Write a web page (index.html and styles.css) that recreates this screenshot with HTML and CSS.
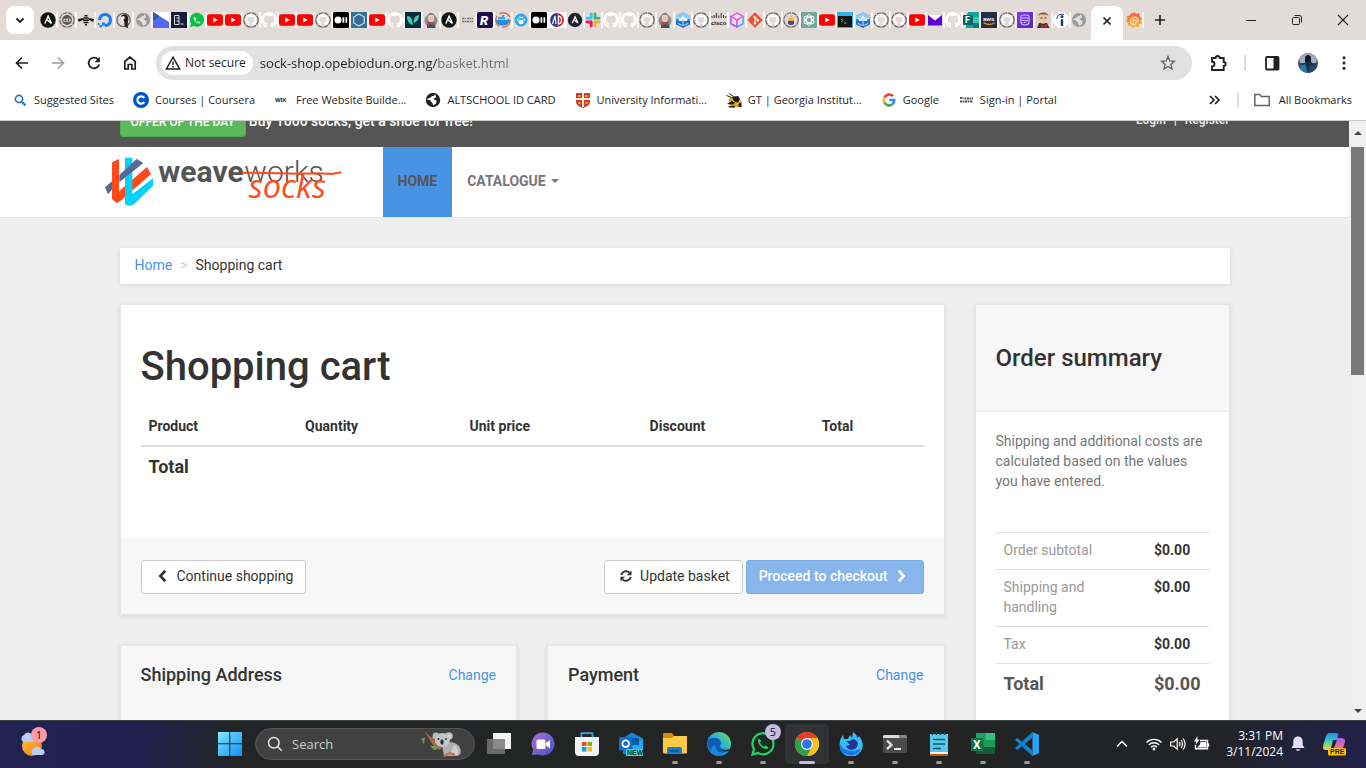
FILE: index.html
```html
<!DOCTYPE html>
<html lang="en">
<head>
<meta charset="utf-8">
<meta name="viewport" content="width=device-width, initial-scale=1">
<title>Shopping cart</title>
<link rel="stylesheet" href="styles.css">
</head>
<body>
<svg class="sprite" aria-hidden="true">
  <defs>
    <linearGradient id="g-win" x1="0" y1="0" x2="1" y2="1"><stop offset="0" stop-color="#7ceaff"/><stop offset="1" stop-color="#0d8df5"/></linearGradient>
    <linearGradient id="g-chat" x1="0" y1="0" x2="1" y2="1"><stop offset="0" stop-color="#a571cf"/><stop offset="1" stop-color="#4a52cf"/></linearGradient>
    <linearGradient id="g-edge" x1="0" y1="1" x2="1" y2="0"><stop offset="0" stop-color="#0b5cb5"/><stop offset=".5" stop-color="#27a9e0"/><stop offset="1" stop-color="#6fe45e"/></linearGradient>
    <linearGradient id="g-sun" x1="0" y1="0" x2="1" y2="1"><stop offset="0" stop-color="#ffc53a"/><stop offset="1" stop-color="#ef7a0c"/></linearGradient>
    <linearGradient id="g-cop" x1="0" y1="0" x2="0" y2="1"><stop offset="0" stop-color="#1b8df0"/><stop offset=".5" stop-color="#3fd1b0"/><stop offset="1" stop-color="#f6d02c"/></linearGradient>
    <linearGradient id="g-cop2" x1="0" y1="0" x2="0" y2="1"><stop offset="0" stop-color="#a45bf0"/><stop offset="1" stop-color="#ff7d6e"/></linearGradient>
    <linearGradient id="g-graf" x1="0" y1="0" x2="0" y2="1"><stop offset="0" stop-color="#f0562c"/><stop offset="1" stop-color="#fbc32c"/></linearGradient>
    <linearGradient id="g-purple" x1="0" y1="0" x2="1" y2="1"><stop offset="0" stop-color="#7a3ff0"/><stop offset="1" stop-color="#5a22b8"/></linearGradient>
    <path id="cat" d="M8 0C3.58 0 0 3.58 0 8c0 3.54 2.29 6.53 5.47 7.59.4.07.55-.17.55-.38 0-.19-.01-.82-.01-1.49-2.01.37-2.53-.49-2.69-.94-.09-.23-.48-.94-.82-1.13-.28-.15-.68-.52-.01-.53.63-.01 1.08.58 1.23.82.72 1.21 1.87.87 2.33.66.07-.52.28-.87.51-1.07-1.78-.2-3.64-.89-3.64-3.95 0-.87.31-1.59.82-2.15-.08-.2-.36-1.02.08-2.12 0 0 .67-.21 2.2.82.64-.18 1.32-.27 2-.27s1.36.09 2 .27c1.53-1.04 2.2-.82 2.2-.82.44 1.1.16 1.92.08 2.12.51.56.82 1.27.82 2.15 0 3.07-1.87 3.75-3.65 3.95.29.25.54.73.54 1.48 0 1.07-.01 1.93-.01 2.2 0 .21.15.46.55.38A8.01 8.01 0 0 0 16 8c0-4.42-3.58-8-8-8z"/>
  </defs>
  <symbol id="ghw" viewBox="0 0 16 16"><use href="#cat" fill="#fff"/></symbol>
  <symbol id="ghd" viewBox="0 0 16 16"><circle cx="8" cy="8" r="7.2" fill="none" stroke="#6b6868" stroke-width="1.3" stroke-dasharray="5 .8"/><g transform="translate(2.2 2.2) scale(.73)"><use href="#cat" fill="#fff"/></g></symbol>
  <symbol id="ans" viewBox="0 0 16 16"><circle cx="8" cy="8" r="7.7" fill="#111"/><path d="M4.8 11.6 8.1 4.2l3.3 7.2-4.6-3.6" fill="none" stroke="#fff" stroke-width="1.4"/></symbol>
  <symbol id="ans2" viewBox="0 0 16 16"><circle cx="8" cy="8" r="7.2" fill="#16222e"/><path d="M5.2 11.2 8.1 4.8l2.9 6.2-4.2-3.2" fill="none" stroke="#fff" stroke-width="1.3"/></symbol>
  <symbol id="mask" viewBox="0 0 16 16"><circle cx="8" cy="8" r="7.2" fill="none" stroke="#6b6868" stroke-width="1.2" stroke-dasharray="5 .8"/><circle cx="8" cy="8" r="5" fill="#5c5858"/><path d="M4.500 6.800h7v2.800h-7z" fill="#fff"/><circle cx="6.500" cy="8.200" r="1" fill="#333"/><circle cx="9.500" cy="8.200" r="1" fill="#333"/></symbol>
  <symbol id="bee" viewBox="0 0 16 16"><path d="M0 7l5.500-1v1.500L2 9.500H.5zM16 7l-5.500-1v1.500l3.500 2h1.500zM6.500 3h3v1.500h-3zM5.500 5.200h5v1.600h-5zM5 7.500h6v1.600H5zM5.500 9.800h5v1.500h-5zM7 12h2v1.500H7z" fill="#17120f"/></symbol>
  <symbol id="docean" viewBox="0 0 16 16"><path d="M8 13.500A5.500 5.500 0 1 0 2.500 8" fill="none" stroke="#0a80ff" stroke-width="3.200"/><path d="M5 10.500h3v3H5zM2.500 13H5v2.300H2.500zM.8 11h1.800v2H.8z" fill="#0a80ff"/></symbol>
  <symbol id="eagle" viewBox="0 0 16 16"><circle cx="7.500" cy="8" r="6.600" fill="none" stroke="#666" stroke-width="1.300"/><path d="M5 4c3-3 6-2 7 1 1 3-1 6 0 11-3 0-4-3-3.500-6L7 7z" fill="#211d1c"/><path d="M5 5l3-1 1 2-3 3z" fill="#fff"/></symbol>
  <symbol id="globe" viewBox="0 0 16 16"><circle cx="8" cy="8" r="7" fill="#969a9f"/><path d="M9 1.800c1 2-1 2.400-2 2.400S6 6 4.500 6 3 7.500 1.800 8c2 0 3.500 0 4 1.500S8 11 8 14c2-1 3.500-2 3.500-4S9 8 8.500 7 11 6.500 11 5s-1-2-2-3.200z" fill="#e4dcda"/></symbol>
  <symbol id="play" viewBox="0 0 16 16"><path d="M0 0h16v16H0z" fill="#fff"/><path d="M0 0l16 10v6H1z" fill="#5468f5"/><path d="M0 0l6 3.500V16H0z" fill="#3658b5"/><path d="M0 9l6-4v11H0z" fill="#4d69ec"/></symbol>
  <symbol id="dark" viewBox="0 0 16 16"><path d="M0 0h16v16H0z" fill="#171c38"/><path d="M3.500 3.500H8v9H3.500zM5.500 6H8M5.500 9H8M9.500 12h3" fill="none" stroke="#d9dce8" stroke-width="1"/></symbol>
  <symbol id="wa" viewBox="0 0 16 16"><path d="M1 15.200l1-3.800A7 7 0 1 1 4.800 14z" fill="#0bc143"/><path d="M5.500 4.500c-1.500 1-.5 3.500 1.300 5.200s4 2.300 4.900.9l-1.900-1.200-1 .8c-1-.4-1.900-1.400-2.300-2.400l.8-.9z" fill="#fff"/></symbol>
  <symbol id="yt" viewBox="0 0 16 16"><rect y="2.300" width="16" height="11.400" rx="2.600" fill="#f00"/><path d="M6.300 5.500v5l4.400-2.500z" fill="#fff"/></symbol>
  <symbol id="medium" viewBox="0 0 16 16"><rect width="16" height="16" rx="1.500" fill="#000"/><circle cx="5" cy="8" r="3.500" fill="#fff"/><path d="M9.500 5.200h1.800v5.600H9.500zM12.500 5.200h1.700v5.600h-1.700z" fill="#fff"/></symbol>
  <symbol id="hex" viewBox="0 0 16 16"><path d="M0 0h16v16H0z" fill="#336e96"/><path d="M8 2l5.300 3v6L8 14l-5.300-3V5z" fill="none" stroke="#cfe0ec" stroke-width="1.200"/></symbol>
  <symbol id="leaf" viewBox="0 0 16 16"><path d="M0 0h16v16H0z" fill="#0b2a3d"/><path d="M2 4c4 0 5.500 3 5.700 9C4 12 2 9 2 4zM14 3c-4 1-5.500 3.500-5.400 8C12 10 14 7 14 3z" fill="#41d2b0"/></symbol>
  <symbol id="jenk" viewBox="0 0 16 16"><circle cx="8" cy="8.500" r="6.500" fill="#8d8b8c"/><path d="M4 16c0-5 1-6 4-6s4.500 2 4.500 6z" fill="#31556b"/><ellipse cx="8" cy="5.500" rx="3.200" ry="4.700" fill="#e3c7b4"/><path d="M4.800 3.500C5.500 0 10.500 0 11.200 3.500L9.500 2.500h-3z" fill="#6a5a52"/><path d="M5 9.500l3 1.500 3-1.500v4L8 12l-3 2z" fill="#d2393b"/></symbol>
  <symbol id="jenk2" viewBox="0 0 16 16"><path d="M0 0h16v16H0z" fill="#dcd3ce"/><path d="M2 16l2-5h8l2.500 5z" fill="#383c42"/><ellipse cx="8" cy="6" rx="4.800" ry="5.800" fill="#ecc7a2"/><path d="M3 4c1-4 9-5 10.500 0l-2-1.500H5z" fill="#6f5a4a"/><path d="M6 13l3 1 3-2v3.500l-3-1-3 1z" fill="#cc3030"/><path d="M5.500 6h2M9.500 6h2" stroke="#333"/></symbol>
  <symbol id="docker" viewBox="0 0 16 16"><circle cx="8" cy="8" r="7.200" fill="none" stroke="#e05a3c" stroke-width="1.200" stroke-dasharray="12 3"/><path d="M1 8h11c1-1 2-1 3-.5-1 4-3 6-7 6S1.500 12 1 8z" fill="#1d8fe0"/><path d="M3 5h7v2.500H3zM7 3h2v2H7z" fill="#3aa5ee"/></symbol>
  <symbol id="paw" viewBox="0 0 16 16"><circle cx="8" cy="8" r="6.500" fill="#27a8ef"/><ellipse cx="8" cy="10" rx="2.600" ry="2.200" fill="#fff"/><circle cx="4.700" cy="7.700" r="1" fill="#fff"/><circle cx="6.800" cy="5.600" r="1" fill="#fff"/><circle cx="9.300" cy="5.600" r="1" fill="#fff"/><circle cx="11.300" cy="7.700" r="1" fill="#fff"/></symbol>
  <symbol id="ad" viewBox="0 0 16 16"><path d="M0 0h16v16H0z" fill="#fff"/><path d="M8 1a7 7 0 0 0 0 14z" fill="#2b3d8c"/><path d="M8 1a7 7 0 0 1 0 14z" fill="#d7263c"/><path d="M3.500 12L6 4l1 8M9.500 4v8c4 0 4-8 0-8z" fill="none" stroke="#fff" stroke-width="1.200"/></symbol>
  <symbol id="slack" viewBox="0 0 16 16"><g stroke-width="2.800" stroke-linecap="round"><path d="M6.200 2v4M2 6.200h4" stroke="#36c5f0"/><path d="M10 2v4.200h4" fill="none" stroke="#2eb67d"/><path d="M10 10h4M10 10v4" stroke="#ecb22e"/><path d="M6.200 10v4M2 10h4" stroke="#e01e5a"/></g></symbol>
  <symbol id="helm" viewBox="0 0 16 16"><path d="M8 .3l7 3.500v8.400l-7 3.500-7-3.500V3.800z" fill="#3c8bd9"/><path d="M1 3.800L8 .3l7 3.500V7H1z" fill="#8ccbf5"/><path d="M1 9h14v3.200l-7 3.500-7-3.500z" fill="#2468c4"/><path d="M2.500 7.500l3 1.500h5l3-1.500-1 4.500h-9z" fill="#1f6fd6"/><path d="M3 5l2 2 3-3.500L11 7l2-2-1 4H4z" fill="#e2f5ff"/><path d="M3 11c2 3 8 3 10 0M8 7v6" fill="none" stroke="#9ad3fb" stroke-width="1.200"/></symbol>
  <symbol id="cube" viewBox="0 0 16 16"><path d="M8 1l6 3.300v7.400L8 15l-6-3.300V4.300z" fill="#f2dff8"/><path d="M2 4.300L8 1l6 3.300L8 8z" fill="none" stroke="#e85ce8" stroke-width="1.500"/><path d="M2 4.300v7.400L8 15V8" fill="none" stroke="#b84df0" stroke-width="1.500"/><path d="M14 4.300v7.400L8 15" fill="none" stroke="#4aa8f5" stroke-width="1.500"/></symbol>
  <symbol id="git" viewBox="0 0 16 16"><path d="M8 .3L15.700 8 8 15.700.3 8z" fill="#ef5133"/><path d="M6.300 3.700L8 5.500v6M8 5.500l2.800 2.500" stroke="#fff" fill="none"/><circle cx="8" cy="11.300" r="1.200" fill="#fff"/><circle cx="10.800" cy="8.200" r="1.200" fill="#fff"/><circle cx="8" cy="5.600" r="1.200" fill="#fff"/></symbol>
  <symbol id="sun" viewBox="0 0 16 16"><circle cx="8" cy="8" r="7.200" fill="none" stroke="#6b6868" stroke-width="1.200" stroke-dasharray="5 .8"/><path d="M5 8.500h6V12c-2 1.500-4 1.500-6 0z" fill="#4b4b78"/><path d="M5.500 8.500a2.500 2.500 0 0 1 5 0zM8 3v2M4.500 4.500l1 1M11.500 4.500l-1 1" stroke="#f2a23a" fill="#f6b14a"/></symbol>
  <symbol id="gpt" viewBox="0 0 16 16"><rect width="16" height="16" rx="1" fill="#74a898"/><g fill="none" stroke="#fff" stroke-width=".9"><ellipse cx="8" cy="8" rx="2.600" ry="5.400"/><ellipse cx="8" cy="8" rx="2.600" ry="5.400" transform="rotate(60 8 8)"/><ellipse cx="8" cy="8" rx="2.600" ry="5.400" transform="rotate(120 8 8)"/></g></symbol>
  <symbol id="term" viewBox="0 0 16 16"><path d="M0 0h16v16H0z" fill="#2fb3e8"/><path d="M1 4h14v11H1z" fill="#151515"/><path d="M4 7l2 1.500L4 10M7 11h2.500" stroke="#42d36b" fill="none"/></symbol>
  <symbol id="mail" viewBox="0 0 16 16"><path d="M1 3h14v10.500H1z" fill="#6001d2"/><path d="M1 3h14L8 8.500z" fill="#fff"/></symbol>
  <symbol id="pur" viewBox="0 0 16 16"><path d="M0 0h16v16H0z" fill="url(#g-purple)"/><path d="M4 4.500C4 2.500 12 2.500 12 4.500V10c0 2-2 3-4 3s-4-1-4-3zM5 6h6M5 8.500h6M6.500 10.500h3" fill="none" stroke="#d9c2ff" stroke-width="1.200"/></symbol>
  <symbol id="info" viewBox="0 0 16 16"><circle cx="8" cy="8" r="8" fill="#fff"/><circle cx="9" cy="4.500" r="1.500" fill="#0b3a9c"/><path d="M7.800 7.200h2.400V14H7.800z" fill="#0b3a9c"/><path d="M4 7c0-4 3-5.500 7-4.500" stroke="#0b3a9c" fill="none"/></symbol>
  <symbol id="graf" viewBox="0 0 16 16"><path d="M8 0l2 1.800 3-.3.6 2.700L16 6l-1.200 2.500L16 11l-2.600 1.300L12.500 15l-3-.3L7 16l-1.800-2L2.200 13.700 2 11 0 9l1.400-2.300L1 4l3-.6L5.400.9 8 1.500z" fill="url(#g-graf)"/><path d="M12.300 9.800c.5-4-3-5.500-5.500-4.200S4 11.500 7 12.300s4.500-3 2.500-4.200-3 1.200-1.700 1.700" fill="none" stroke="#f3e3dc" stroke-width="1.300"/></symbol>
  <symbol id="chev" viewBox="0 0 16 16"><path d="M10.500 2L5 8l5.500 6" fill="none" stroke="currentColor" stroke-width="3"/></symbol>
</svg>

<header class="browser">
  <div class="tabstrip">
    <button class="tab-search" aria-label="Search tabs"><svg viewBox="0 0 16 16"><path d="M4.500 6.500L8 10l3.500-3.500" fill="none" stroke="#1f1f1f" stroke-width="1.800"/></svg></button>
    <div class="tabs">
      <button class="tab wide" aria-label="Ansible"><svg><use href="#ans"/></svg></button>
      <button class="tab wide" aria-label="Profile"><svg><use href="#mask"/></svg></button>
      <button class="tab wide" aria-label="Bee"><svg><use href="#bee"/></svg></button>
      <button class="tab wide" aria-label="DigitalOcean"><svg><use href="#docean"/></svg></button>
      <button class="tab wide" aria-label="Eagle"><svg><use href="#eagle"/></svg></button>
      <button class="tab wide" aria-label="Site"><svg><use href="#globe"/></svg></button>
      <button class="tab" aria-label="Player"><svg><use href="#play"/></svg></button>
      <button class="tab" aria-label="Learning"><svg><use href="#dark"/></svg></button>
      <button class="tab" aria-label="WhatsApp"><svg><use href="#wa"/></svg></button>
      <button class="tab" aria-label="YouTube"><svg><use href="#yt"/></svg></button>
      <button class="tab" aria-label="YouTube"><svg><use href="#yt"/></svg></button>
      <button class="tab" aria-label="GitHub"><svg><use href="#ghd"/></svg></button>
      <button class="tab" aria-label="GitHub"><svg><use href="#ghw"/></svg></button>
      <button class="tab" aria-label="YouTube"><svg><use href="#yt"/></svg></button>
      <button class="tab" aria-label="YouTube"><svg><use href="#yt"/></svg></button>
      <button class="tab" aria-label="GitHub"><svg><use href="#ghd"/></svg></button>
      <button class="tab" aria-label="Medium"><svg><use href="#medium"/></svg></button>
      <button class="tab" aria-label="Hex"><svg><use href="#hex"/></svg></button>
      <button class="tab" aria-label="YouTube"><svg><use href="#yt"/></svg></button>
      <button class="tab" aria-label="GitHub"><svg><use href="#ghw"/></svg></button>
      <button class="tab" aria-label="Leaf"><svg><use href="#leaf"/></svg></button>
      <button class="tab" aria-label="Jenkins"><svg><use href="#jenk"/></svg></button>
      <button class="tab" aria-label="Ansible"><svg><use href="#ans"/></svg></button>
      <button class="tab" aria-label="AltSchool"><svg viewBox="0 0 16 16"><path d="M3 6.500h4M8 6.500h6M3 9.500h11" stroke="#77706e" stroke-width="1.600" stroke-dasharray="2 .5"/></svg></button>
      <button class="tab" aria-label="R"><svg viewBox="0 0 16 16"><rect width="16" height="16" rx="2" fill="#1e0f4a"/><text x="3" y="13" font-family="Roboto" font-style="italic" font-weight="900" font-size="13" fill="#fff">R</text></svg></button>
      <button class="tab" aria-label="Docker"><svg><use href="#docker"/></svg></button>
      <button class="tab" aria-label="Paw"><svg><use href="#paw"/></svg></button>
      <button class="tab" aria-label="Medium"><svg><use href="#medium"/></svg></button>
      <button class="tab" aria-label="AD"><svg><use href="#ad"/></svg></button>
      <button class="tab" aria-label="Ansible"><svg><use href="#ans2"/></svg></button>
      <button class="tab" aria-label="Slack"><svg><use href="#slack"/></svg></button>
      <button class="tab" aria-label="GitHub"><svg><use href="#ghw"/></svg></button>
      <button class="tab" aria-label="GitHub"><svg><use href="#ghw"/></svg></button>
      <button class="tab" aria-label="GitHub"><svg><use href="#ghd"/></svg></button>
      <button class="tab" aria-label="Jenkins"><svg><use href="#jenk"/></svg></button>
      <button class="tab" aria-label="Helm"><svg><use href="#helm"/></svg></button>
      <button class="tab" aria-label="GitHub"><svg><use href="#ghd"/></svg></button>
      <button class="tab" aria-label="Cisco"><svg viewBox="0 0 16 16"><path d="M1 4v2M3.200 3v3M5.400 1v5M7.800 3.500V6M10.200 1v5M12.500 3v3M14.800 4v2" stroke="#333"/><text x="0" y="13" font-family="Liberation Sans" font-weight="700" font-size="6" fill="#222">cisco</text></svg></button>
      <button class="tab" aria-label="Cube"><svg><use href="#cube"/></svg></button>
      <button class="tab" aria-label="Git"><svg><use href="#git"/></svg></button>
      <button class="tab" aria-label="GitHub"><svg><use href="#ghd"/></svg></button>
      <button class="tab" aria-label="Sun"><svg><use href="#sun"/></svg></button>
      <button class="tab" aria-label="ChatGPT"><svg><use href="#gpt"/></svg></button>
      <button class="tab" aria-label="YouTube"><svg><use href="#yt"/></svg></button>
      <button class="tab" aria-label="Terminal"><svg><use href="#term"/></svg></button>
      <button class="tab" aria-label="Helm"><svg><use href="#helm"/></svg></button>
      <button class="tab" aria-label="GitHub"><svg><use href="#ghd"/></svg></button>
      <button class="tab" aria-label="GitHub"><svg><use href="#ghd"/></svg></button>
      <button class="tab" aria-label="YouTube"><svg><use href="#yt"/></svg></button>
      <button class="tab" aria-label="Mail"><svg><use href="#mail"/></svg></button>
      <button class="tab" aria-label="GitHub"><svg><use href="#ghw"/></svg></button>
      <button class="tab" aria-label="Forms"><svg viewBox="0 0 16 16"><path d="M5 0h11v16H3V5z" fill="#12a5a0"/><path d="M10 5h6v6h-6z" fill="#37c6b8"/><path d="M10 11h6v5h-6z" fill="#0b7a78"/><rect y="3" width="10" height="10" rx="1" fill="#04646a"/><text x="2" y="11" font-family="Roboto" font-weight="700" font-size="9" fill="#fff">F</text></svg></button>
      <button class="tab" aria-label="AWS"><svg viewBox="0 0 16 16"><path d="M0 0h16v16H0z" fill="#232f3e"/><text x="2" y="9" font-family="Liberation Sans" font-weight="700" font-size="6" fill="#fff">aws</text><path d="M2.500 10.500c3 2.500 8 2.500 11 .3" stroke="#f90" fill="none" stroke-width="1.200"/></svg></button>
      <button class="tab" aria-label="GitHub"><svg><use href="#ghd"/></svg></button>
      <button class="tab" aria-label="Shield"><svg><use href="#pur"/></svg></button>
      <button class="tab" aria-label="Jenkins"><svg><use href="#jenk2"/></svg></button>
      <button class="tab" aria-label="Info"><svg><use href="#info"/></svg></button>
      <button class="tab bare" aria-label="Site"><svg><use href="#globe"/></svg></button>
      <button class="tab-active" aria-label="Close tab"><svg viewBox="0 0 16 16"><path d="M4.500 4.500l7 7M11.500 4.500l-7 7" stroke="#1f1f1f" stroke-width="1.700"/></svg></button>
      <button class="tab" aria-label="Grafana"><svg><use href="#graf"/></svg></button>
    </div>
    <button class="new-tab" aria-label="New tab"><svg viewBox="0 0 16 16"><path d="M8 3v10M3 8h10" stroke="#1f1f1f" stroke-width="1.600"/></svg></button>
    <div class="window-controls">
      <button aria-label="Minimize"><svg viewBox="0 0 16 16"><path d="M3 8.500h10" stroke="#1f1f1f"/></svg></button>
      <button aria-label="Restore"><svg viewBox="0 0 16 16"><path d="M5.500 3.500h5a2 2 0 0 1 2 2v5" fill="none" stroke="#1f1f1f"/><rect x="3.500" y="5.500" width="7" height="7" rx="1" fill="none" stroke="#1f1f1f"/></svg></button>
      <button aria-label="Close"><svg viewBox="0 0 16 16"><path d="M3 3l10 10M13 3L3 13" stroke="#1f1f1f" stroke-width="1.100"/></svg></button>
    </div>
  </div>

  <div class="toolbar">
    <button class="tool" aria-label="Back"><svg viewBox="0 0 16 16"><path d="M14 8H3M8 2.500L2.500 8 8 13.500" fill="none" stroke="#1f1f1f" stroke-width="1.700"/></svg></button>
    <button class="tool" aria-label="Forward"><svg viewBox="0 0 16 16"><path d="M2 8h11M8 2.500L13.500 8 8 13.500" fill="none" stroke="#9c9c9c" stroke-width="1.500"/></svg></button>
    <button class="tool" aria-label="Reload"><svg viewBox="0 0 16 16"><path d="M13.200 9.500A5.400 5.400 0 1 1 12 4.300" fill="none" stroke="#1f1f1f" stroke-width="1.800"/><path d="M13.800 1.800v5.400H8.500z" fill="#1f1f1f"/></svg></button>
    <button class="tool" aria-label="Home"><svg viewBox="0 0 16 16"><path d="M2.800 14V6.500L8 2.200l5.200 4.300V14H9.800V9.500H6.200V14z" fill="none" stroke="#1f1f1f" stroke-width="1.700"/></svg></button>
    <div class="omnibox">
      <button class="chip"><svg viewBox="0 0 16 16"><path d="M8 2.200L14.600 14H1.400z" fill="none" stroke="#1f1f1f" stroke-width="1.500"/><path d="M8 6.500v3.500M8 11v1.500" stroke="#1f1f1f" stroke-width="1.400"/></svg>Not secure</button>
      <input class="url" type="text" aria-label="Address" value="sock-shop.opebiodun.org.ng/basket.html">
      <button class="star" aria-label="Bookmark"><svg viewBox="0 0 16 16"><path d="M8 1.500l1.800 4.400 4.700.4-3.600 3.100 1.100 4.600-4-2.500L4 14l1.100-4.600L1.500 6.300l4.700-.4z" fill="none" stroke="#5f6368" stroke-width="1.300"/></svg></button>
    </div>
    <button class="ext" aria-label="Extensions"><svg viewBox="0 0 18 18"><path d="M3 4h3.700a2 2 0 0 1 4 0h4v4a2 2 0 0 1 0 4v4H3v-3.500a2.300 2.300 0 0 0 0-5z" fill="none" stroke="#202124" stroke-width="1.900"/></svg></button>
    <span class="divider"></span>
    <button class="panel-btn" aria-label="Side panel"><svg viewBox="0 0 16 16"><rect x="2" y="2" width="12.500" height="12.500" rx="1" fill="none" stroke="#202124" stroke-width="1.800"/><path d="M9.500 2H15v12.500H9.500z" fill="#202124"/></svg></button>
    <button class="avatar" aria-label="Profile"><svg viewBox="0 0 20 20"><circle cx="10" cy="10" r="10" fill="#39485c"/><path d="M1 6a10 10 0 0 1 18 0l-1 4H2z" fill="#9fb0c4"/><path d="M7 5c0-4 6-4 6 0v4l-3 2-3-2z" fill="#181a22"/><path d="M4 11l4-2h5l4 3-2 6q-5 3-9 0z" fill="#20304a"/><path d="M1 14l6-3 3 9a10 10 0 0 1-9-6z" fill="#2878a8"/><path d="M13 12l5 2a10 10 0 0 1-8 6z" fill="#1c4a78"/></svg></button>
    <button class="tool" aria-label="Menu"><svg viewBox="0 0 16 16"><g fill="#202124"><circle cx="8" cy="2.800" r="1.500"/><circle cx="8" cy="8" r="1.500"/><circle cx="8" cy="13.200" r="1.500"/></g></svg></button>
  </div>

  <nav class="bookmarks" aria-label="Bookmarks">
    <a href="#"><svg viewBox="0 0 16 16"><circle cx="7" cy="7" r="3.600" fill="none" stroke="#1a73c8" stroke-width="1.600"/><path d="M9.800 9.800l3.700 3.700" stroke="#1a73c8" stroke-width="2"/></svg>Suggested Sites</a>
    <a href="#"><svg viewBox="0 0 16 16"><circle cx="8" cy="8" r="8" fill="#0056d2"/><path d="M11.300 10a3.700 3.700 0 1 1 0-4" fill="none" stroke="#fff" stroke-width="2.200"/></svg>Courses | Coursera</a>
    <a href="#"><svg viewBox="0 0 16 16"><text x="1" y="10" font-family="Liberation Sans" font-weight="700" font-size="6" fill="#111">WIX</text></svg>Free Website Builde...</a>
    <a href="#"><svg viewBox="0 0 16 16"><circle cx="8" cy="8" r="7.200" fill="#202124"/><path d="M9.500 1.500c1 2-1 2.600-2 2.600S6 6 4.500 6 3 7 1.800 7.600c2 .4 3.500.2 4 1.600S8 10.500 8 13.500c2-.8 3.500-2 3.500-4S9 8 8.500 7 11 6.500 11 5s-.5-2-1.500-3.500z" fill="#fff"/></svg>ALTSCHOOL ID CARD</a>
    <a href="#"><svg viewBox="0 0 16 16"><path d="M1 1h14v9c0 3-4 5-7 6-3-1-7-3-7-6z" fill="#d23a2e"/><path d="M8 1v14M1 7h14" stroke="#f7ece0" stroke-width="2"/><path d="M3.500 3h2v2h-2zM10.500 3h2v2h-2zM3.500 10h2v2h-2zM10.500 10h2v2h-2z" fill="#f2c12e"/></svg>University Informati...</a>
    <a href="#"><svg viewBox="0 0 16 16"><path d="M3 6l6-2 6 5-1 6-6 .5L3 13z" fill="#e5a823"/><path d="M3 1.500l4.500 3M.5 3.500l5 2" stroke="#1b1b1b" stroke-width="1"/><path d="M6 5l6-1 2 3-2 3.500-4-1zM1 12l5-3 3 2-2 1.500zM2 14.500l6-1 1 2H3zM12.500 12l3-2v5.500l-3-1z" fill="#1b1b1b"/></svg>GT | Georgia Institut...</a>
    <a href="#"><svg viewBox="0 0 16 16"><g fill="none" stroke-width="2.600"><path d="M12 4.200A5.300 5.300 0 0 0 3.400 5.500" stroke="#ea4335"/><path d="M3.400 5.500a5.300 5.300 0 0 0 0 5" stroke="#fbbc05"/><path d="M3.400 10.500a5.300 5.300 0 0 0 8 1.800" stroke="#34a853"/><path d="M11.400 12.300A5.300 5.300 0 0 0 13.300 8H8.200" stroke="#4285f4"/></g></svg>Google</a>
    <a href="#"><svg viewBox="0 0 16 16"><path d="M2 6h3.500M6.500 6.500H15M2 9.500h13" stroke="#5d5856" stroke-width="2" stroke-dasharray="2 .5"/></svg>Sign-in | Portal</a>
    <button class="overflow" aria-label="More bookmarks"><svg viewBox="0 0 16 16"><path d="M4 4l4 4-4 4M9 4l4 4-4 4" fill="none" stroke="#1f1f1f" stroke-width="1.700"/></svg></button>
    <span class="divider"></span>
    <a href="#" class="all"><svg viewBox="0 0 16 16"><path d="M.8 12.500V2.500h5l1.500 2h8v9H.8z" fill="none" stroke="#5f6368" stroke-width="1.500"/></svg>All Bookmarks</a>
  </nav>
</header>

<div class="viewport">
  <div class="page">
    <div class="topbar">
      <div class="container topbar-row">
        <a href="#" class="offer">Offer of the day</a>
        <a href="#" class="offer-text">Buy 1000 socks, get a shoe for free!</a>
        <div class="account"><a href="#">Login</a><span>|</span><a href="#">Register</a></div>
      </div>
    </div>
    <nav class="navbar" aria-label="Main">
      <div class="container navbar-row">
        <a href="#" class="brand" aria-label="Weaveworks Socks">
          <svg viewBox="45 96 720 210">
            <path d="M45 217l21-18v25l-12 14z" fill="#566895"/>
            <path d="M66 142l21-10v97l84-73 12 22-95 82-8 4-14-12z" fill="#ff4b19"/>
            <path d="M105 128h22v110l62-48v22l-56 55q-6 5-15 5-9 0-13-4z" fill="#00d2ff"/>
            <path d="M88 180l52-48 20 12-72 58z" fill="#566895"/>
            <g font-family="Roboto" font-size="90" fill="#555"><text x="205" y="201" font-weight="700">weave</text><text x="463" y="201" font-weight="300">works</text></g>
            <text x="476" y="250" font-family="Open Sans" font-style="italic" font-size="98" fill="#ff4b19">socks</text>
            <path d="M455 173l80 1 90 2 60-1 40 2 29-5" fill="none" stroke="#ff4b19" stroke-width="6"/>
          </svg>
        </a>
        <a href="#" class="nav-link active">Home</a>
        <a href="#" class="nav-link">Catalogue <span class="caret"></span></a>
      </div>
    </nav>

    <main class="container content">
      <ol class="breadcrumb"><li><a href="#">Home</a></li><li>Shopping cart</li></ol>
      <div class="columns">
        <div class="main-col">
          <section class="box">
            <div class="cart-body">
              <h1>Shopping cart</h1>
              <table class="cart">
                <thead><tr><th class="c-product">Product</th><th class="c-qty">Quantity</th><th class="c-price">Unit price</th><th class="c-disc">Discount</th><th>Total</th></tr></thead>
                <tbody><tr><th colspan="5" class="cart-total">Total</th></tr></tbody>
              </table>
            </div>
            <div class="cart-footer">
              <button class="btn"><svg><use href="#chev"/></svg>Continue shopping</button>
              <div class="actions">
                <button class="btn"><svg viewBox="0 0 16 16"><path d="M2.600 6.800A5.600 5.600 0 0 1 12 4.200M13.400 9.200A5.600 5.600 0 0 1 4 11.800" fill="none" stroke="currentColor" stroke-width="2.200"/><path d="M14.300 1.800v5.400H9zM1.700 14.200V8.800H7z" fill="currentColor"/></svg>Update basket</button>
                <button class="btn primary" disabled>Proceed to checkout<svg class="flip"><use href="#chev"/></svg></button>
              </div>
            </div>
          </section>
          <div class="cards">
            <section class="box card"><h2>Shipping Address</h2><a href="#">Change</a></section>
            <section class="box card"><h2>Payment</h2><a href="#">Change</a></section>
          </div>
        </div>
        <aside class="box summary">
          <div class="summary-head"><h3>Order summary</h3></div>
          <div class="summary-body">
            <p>Shipping and additional costs are calculated based on the values you have entered.</p>
            <table class="totals">
              <tbody>
                <tr><td>Order subtotal</td><th>$0.00</th></tr>
                <tr><td>Shipping and handling</td><th>$0.00</th></tr>
                <tr><td>Tax</td><th>$0.00</th></tr>
                <tr class="grand"><td>Total</td><th>$0.00</th></tr>
              </tbody>
            </table>
          </div>
        </aside>
      </div>
    </main>
  </div>
  <div class="scrollbar" aria-hidden="true">
    <span class="arrow up"></span>
    <span class="thumb"></span>
    <span class="arrow down"></span>
  </div>
</div>

<footer class="taskbar">
  <div class="weather"><button aria-label="Weather"><svg viewBox="0 0 28 28"><circle cx="13" cy="16" r="10" fill="url(#g-sun)"/><path d="M4 12a4 4 0 0 1 1-7 5 5 0 0 1 9 1v6zM14 25a3.500 3.500 0 0 1 0-6 4.500 4.500 0 0 1 8 0 3 3 0 0 1 1 6z" fill="#b9cdf2"/></svg><span class="count pink">1</span></button></div>
  <button class="app start" aria-label="Start"><svg viewBox="0 0 24 24"><path d="M0 0h11.300v11.300H0zM12.300 0H24v11.300H12.300zM0 12.300h11.300V24H0zM12.300 12.300H24V24H12.300z" fill="url(#g-win)"/></svg></button>
  <label class="search">
    <svg class="lens" viewBox="0 0 16 16"><circle cx="6.800" cy="6.800" r="5.300" fill="none" stroke="#e8e8e8" stroke-width="1.500"/><path d="M10.800 10.800l4 4" stroke="#e8e8e8" stroke-width="1.500"/></svg>
    <input type="search" placeholder="Search" aria-label="Search">
    <svg class="koala" viewBox="0 0 42 26"><path d="M22 14c6-5 16-3 18 3 2 5 0 8-4 8H24z" fill="#aeb0b2"/><path d="M34 14c3 1 5 5 4 10h-8z" fill="#cfcfce"/><path d="M5 1l12 10 5 6-3 2-6-5z" fill="#b0684a"/><path d="M10 9L18 3" stroke="#b0684a" stroke-width="1.500"/><path d="M1 8l3 5 1-7zM10 15l7 0-3 4zM13 18l6-3-3 4z" fill="#6f9c4e"/><circle cx="16" cy="5" r="3.500" fill="#b9bbbd"/><circle cx="29" cy="5" r="3.800" fill="#b9bbbd"/><circle cx="29" cy="5.500" r="2" fill="#e6e2e2"/><ellipse cx="22.500" cy="9" rx="7.500" ry="7" fill="#c3c5c6"/><ellipse cx="22" cy="11" rx="1.700" ry="2.700" fill="#2b2b2d"/><circle cx="18.500" cy="8" r=".9" fill="#222"/><circle cx="26" cy="8" r=".9" fill="#222"/><path d="M24 25l6-3 5 2" stroke="#c67656" stroke-width="2.500" fill="none"/></svg>
  </label>
  <div class="apps">
    <button class="app" aria-label="Task view"><svg viewBox="0 0 24 24"><path d="M6 1h18v16H6z" fill="#f4f4f4"/><path d="M0 7h18v15H0z" fill="#777" fill-opacity=".85"/></svg></button>
    <button class="app" aria-label="Chat"><svg viewBox="0 0 24 24"><path d="M12 .5A11.500 11.500 0 1 1 7 22.400L.8 23l1.400-5A11.500 11.500 0 0 1 12 .5z" fill="url(#g-chat)"/><rect x="5.500" y="7.500" width="9" height="9.500" rx="1.500" fill="#fff"/><path d="M15 11l4-3v8.500l-4-3z" fill="#fff"/></svg></button>
    <button class="app" aria-label="Store"><svg viewBox="0 0 24 24"><path d="M6.500 6V1.200h11V6" fill="none" stroke="#2fa9e8" stroke-width="1.800"/><path d="M0 5h24v15q0 4-4 4H4q-4 0-4-4z" fill="#f3f3f3"/><path d="M7 10h4.500v4H7z" fill="#f04a24"/><path d="M12.500 10H17v4h-4.500z" fill="#7db700"/><path d="M7 15h4.500v4.500H7z" fill="#149ddf"/><path d="M12.500 15H17v4.500h-4.500z" fill="#fdb900"/></svg></button>
    <button class="app" aria-label="Outlook"><svg viewBox="0 0 24 24"><path d="M4 6l9-5.500 11 6V22H4z" fill="#1685da"/><path d="M13 12L24 7v15H8z" fill="#28a8ea"/><path d="M5 6h15v7H5z" fill="#0b5aab"/><rect y="5" width="13.500" height="13.500" rx="1" fill="#0f6cc9"/><circle cx="6.700" cy="11.700" r="3.300" fill="none" stroke="#fff" stroke-width="1.900"/><rect x="7" y="17" width="17" height="7" fill="#2fdfe0"/><text x="8" y="23" font-family="Liberation Sans" font-weight="700" font-size="7" fill="#062c33">NEW</text></svg></button>
    <button class="app running" aria-label="Explorer"><svg viewBox="0 0 24 24"><path d="M0 2q0-1 1-1h8l2 3v4H0z" fill="#d68b06"/><path d="M0 6h9l2-2h13v16q0 1.500-1.500 1.500h-21Q0 21.500 0 20z" fill="#ffcb45"/><path d="M4 21.500V17q0-2 2-2h11q2 0 2 2v4.500z" fill="#117ad1"/><path d="M7 19h9" stroke="#0b4f94" stroke-width="1.500"/></svg></button>
    <button class="app running" aria-label="Edge"><svg viewBox="0 0 24 24"><circle cx="12" cy="12" r="12" fill="url(#g-edge)"/><path d="M.3 10C2 5 11 4 13.500 9c1.200 2.500-.5 3.500-.5 5.500 0 2.500 4 4.500 9 2A12 12 0 0 1 .3 10z" fill="#0c5db5"/><path d="M8.500 14c0 6 6 8.500 12 5A12 12 0 0 1 4 21c0-5 2-9 4.500-7z" fill="#1b86dc"/><path d="M13.300 15c1 4 8 4 10 1l-2 3.500c-5 0-8-1.500-8-4.500z" fill="#242424"/></svg></button>
    <button class="app running" aria-label="WhatsApp"><svg viewBox="0 0 24 24"><path d="M1.500 22.500l1.500-5.300a10.500 10.500 0 1 1 4 3.800z" fill="#1c2a20" stroke="#27d366" stroke-width="2.200"/><path d="M8 6.500c-2.500 2 0 6.500 2.800 8.700 2.900 2.200 5.600 2.600 6.500.2l-3-1.800-1.300 1.200c-2-.9-3.300-2.300-4-4.200l1.200-1.500z" fill="#27d366"/></svg><span class="count lilac">5</span></button>
    <button class="app current" aria-label="Chrome"><svg viewBox="0 0 24 24"><circle cx="12" cy="12" r="12" fill="#fbc116"/><path d="M12 12L1.600 6A12 12 0 0 1 22.400 6H12z" fill="#e33b2e"/><path d="M1.600 6L12 12l5.200 3L12 24A12 12 0 0 1 1.600 6z" fill="#2da14c"/><path d="M12 24l5.200-9L12 6h10.400A12 12 0 0 1 12 24z" fill="#fbc116"/><circle cx="12" cy="12" r="6" fill="#fff"/><circle cx="12" cy="12" r="4.800" fill="#2f75e8"/></svg></button>
    <button class="app running" aria-label="Firefox"><svg viewBox="0 0 24 24"><path d="M14 0c3 2 4 4 4.500 6L20 4c4 5 5 10 2 15a11.500 11.500 0 0 1-21-3C0 11 1 7 4 3l1 4h4l2-4 2 3z" fill="#35bdf8"/><path d="M1 12c3 6 9 9 21 5a11.500 11.500 0 0 1-21-1z" fill="#1477e8"/><path d="M7 9h4l3-2c5 1 6 6 3 9s-9 2-10-2l4-1z" fill="#24338f"/></svg></button>
    <button class="app running" aria-label="Terminal"><svg viewBox="0 0 24 24"><rect y="3" width="24" height="18" rx="1.500" fill="#4a4a4a"/><path d="M0 6V4.500Q0 3 1.500 3H16v3z" fill="#ddd"/><path d="M16 3h6.500Q24 3 24 4.500V6h-8z" fill="#888"/><path d="M4 8.500l4.500 4.500L4 17" fill="none" stroke="#ddd" stroke-width="2.400"/><path d="M11 17h7" stroke="#fff" stroke-width="1.800"/></svg></button>
    <button class="app running" aria-label="Notepad"><svg viewBox="0 0 24 24"><path d="M3 2h18v21H3z" fill="#5ac8e8"/><path d="M3 20h18v2H3z" fill="#f5f5f5"/><path d="M3 22h18v2H3z" fill="#c4560f"/><path d="M6 7.500h12M6 12h12M6 16.500h8" stroke="#0b5877" stroke-width="1.700"/><path d="M5.500 0v3M9.500 0v3M13.500 0v3M17.500 0v3" stroke="#174b5e" stroke-width="1.500"/></svg></button>
    <button class="app running" aria-label="Excel"><svg viewBox="0 0 24 24"><path d="M5 1h19v21H5z" fill="#1c9c5c"/><path d="M15 1h9v7h-9z" fill="#33c481"/><path d="M5 1h10v7H5z" fill="#21a366"/><path d="M5 15h19v7H5z" fill="#155c38"/><rect y="6" width="12.500" height="13" rx="1" fill="#0f7440"/><text x="2" y="17" font-family="Roboto" font-weight="700" font-size="12" fill="#fff">X</text></svg></button>
    <button class="app running" aria-label="Code"><svg viewBox="0 0 24 24"><path d="M17.500 0L24 3v18l-6.500 3z" fill="#2aa5f5"/><path d="M17.500 5.500L2.500 18 0 16 16.500 1 17.500 0zM0 8l2.500-2L17.500 18.500V24z" fill="#1283d0"/></svg></button>
  </div>
  <div class="tray">
    <button aria-label="Hidden icons"><svg viewBox="0 0 16 16"><path d="M3 10.500L8 5.500l5 5" fill="none" stroke="#fff" stroke-width="1.500"/></svg></button>
    <button class="status" aria-label="Network, volume and battery">
      <svg viewBox="0 0 16 16"><g fill="none" stroke="#fff" stroke-width="1.300"><path d="M.5 6.500a10.600 10.600 0 0 1 15 0M2.800 8.900a7.400 7.400 0 0 1 10.400 0M5 11.200a4.300 4.300 0 0 1 6 0"/></g><circle cx="8" cy="13" r="1.400" fill="#fff"/></svg>
      <svg viewBox="0 0 16 16"><g fill="none" stroke="#fff" stroke-width="1.200"><path d="M.7 6h3L7.200 2.800v10.400L3.700 10h-3zM9.200 5.800q1.500 2.200 0 4.400M11.200 4q2.600 4 0 8M13.200 2.500q3.800 5.500 0 11"/></g></svg>
      <svg viewBox="0 0 16 16"><path d="M6 4.500h7.500v8.300H1.500V9M14.500 7.500v3" fill="none" stroke="#fff" stroke-width="1.400"/><path d="M6.500 6h6v5.500H3l3-3z" fill="#fff"/><path d="M3.500 0L0 5.500h2.300L1.500 9 5.500 3.500H3.300z" fill="#fff"/></svg>
    </button>
    <button class="clock"><span>3:31 PM</span><span>3/11/2024</span></button>
    <button class="bell" aria-label="Notifications"><svg viewBox="0 0 16 16"><path d="M8 .5c3.200 0 4.700 2.300 4.700 5v3.500l1.800 3h-13l1.800-3V5.500c0-2.700 1.500-5 4.700-5zM5.800 13.300h4.400Q9.800 15 8 15t-2.200-1.700z" fill="#e4defa"/></svg></button>
    <button class="copilot" aria-label="Copilot"><svg viewBox="0 0 24 24"><path d="M7 1h7q3 0 2 3l-4 11q-1 3-4 3H4q-4 0-3-4L4 4q1-3 3-3z" fill="url(#g-cop)"/><path d="M14 6h5q5 0 4 4l-2 6q-1 3-4 3h-6z" fill="url(#g-cop2)"/><path d="M11 8h4l-3 8H9z" fill="#242450"/><rect x="6" y="16" width="18" height="7.500" rx="1.500" fill="#ffc600"/><text x="8" y="22" font-family="Liberation Sans" font-weight="700" font-size="7" fill="#222">PRE</text></svg></button>
  </div>
</footer>
</body>
</html>
```
FILE: styles.css
```css
* { box-sizing: border-box; }
body {
  margin: 0;
  height: 100vh;
  display: flex;
  flex-direction: column;
  overflow: hidden;
  font-family: Roboto, sans-serif;
  font-size: 14px;
  line-height: 20px;
  color: #333;
}
button, input { font: inherit; color: inherit; border: 0; background: none; padding: 0; margin: 0; }
button { display: flex; align-items: center; justify-content: center; }
svg { display: block; flex: none; width: 16px; height: 16px; }
a { text-decoration: none; color: #4993e4; }
.sprite { position: absolute; width: 0; height: 0; }

/* Browser chrome */
.browser { font-family: "Open Sans", sans-serif; font-size: 11px; color: #1f1f1f; border-bottom: 1px solid #c8cfc9; background: #fff; }
.tabstrip { display: flex; align-items: center; height: 40px; background: #e3dbd8; }
.tab-search { width: 28px; height: 28px; margin: 0 5px 0 6px; border-radius: 8px; background: #fff; }
.tabs { display: flex; align-items: center; height: 40px; }
.tab { width: 18px; height: 16px; border-right: 2px solid #f8f5f4; }
.tab.wide { width: 19px; }
.tab.bare { border-color: transparent; }
.tab-active { width: 32px; height: 34px; align-self: flex-end; margin: 0 3px 0 2px; padding-bottom: 4px; border-radius: 8px 8px 0 0; background: #fff; }
.new-tab { width: 28px; height: 28px; margin-left: 2px; }
.window-controls { display: flex; margin-left: auto; }
.window-controls button { width: 46px; height: 40px; }
.toolbar { display: flex; align-items: center; height: 46px; padding: 0 4px; }
.tool { width: 36px; height: 36px; }
.omnibox { flex: 1; display: flex; align-items: center; height: 34px; margin: 0 8px; padding: 0 5px; border-radius: 17px; background: #e1e1e1; }
.chip { gap: 4px; height: 24px; padding: 0 7px 0 4px; border-radius: 12px; background: #fff; font-size: 12px; }
.url {
  flex: 1;
  margin-left: 7px;
  font-size: 13px;
  color: transparent;
  background: linear-gradient(90deg, #1f1f1f 177px, #6b6b6b 177px);
  -webkit-background-clip: text;
  background-clip: text;
  outline: 0;
}
.star { width: 28px; height: 28px; margin-right: 5px; }
.ext { width: 36px; height: 36px; }
.ext svg { width: 18px; height: 18px; }
.divider { width: 2px; height: 16px; background: #e0dbd9; }
.toolbar .divider { margin: 0 8px; }
.panel-btn { width: 36px; height: 36px; }
.avatar { width: 36px; height: 36px; }
.avatar svg { width: 20px; height: 20px; }
.bookmarks { display: flex; align-items: center; gap: 19px; height: 34px; padding: 0 14px 6px 12px; white-space: nowrap; }
.bookmarks a { display: flex; align-items: center; gap: 6px; color: #1f1f1f; }
.bookmarks .overflow { margin-left: auto; }
.bookmarks .divider { margin: 0 -4px; }
.bookmarks .all { gap: 9px; }

/* Page viewport */
.viewport { flex: 1; min-height: 0; display: flex; background: #efefef; }
.page { flex: 1; min-width: 0; overflow: hidden; }
.scrollbar { width: 17px; display: flex; flex-direction: column; align-items: center; background: #f0f0f0; }
.thumb { width: 13px; height: 38%; margin: 12px 0 auto; background: #787878; }
.arrow { border: 4px solid transparent; }
.arrow.up { height: 9px; margin-top: 5px; border-top: 0; border-bottom-color: #444; }
.arrow.down { margin-bottom: 7px; border-bottom: 0; border-top-color: #444; }
.container { width: 100%; max-width: 1140px; margin: 0 auto; padding: 0 15px; }

.topbar { height: 26px; overflow: hidden; background: #555; }
.topbar-row { display: flex; align-items: flex-end; height: 26px; padding-bottom: 10px; }
.offer { padding: 5px 10px; border: 1px solid #4cae4c; border-radius: 3px; background: #5cb85c; color: #fff; font-size: 12px; line-height: 18px; font-weight: 500; text-transform: uppercase; }
.offer-text { margin: 0 auto 6px 3px; color: #fff; font-weight: 500; }
.account { display: flex; gap: 8px; margin-bottom: 8px; color: #eee; font-size: 12px; line-height: 18px; font-weight: 500; }
.account a { color: #eee; }

.navbar { background: #fff; border-bottom: 1px solid #e6e6e6; }
.navbar-row { display: flex; height: 70px; padding: 0; }
.brand { margin-right: 38px; }
.brand svg { width: 240px; height: 70px; }
.nav-link { display: flex; align-items: center; padding: 0 15px 2px; color: #777; font-weight: 700; text-transform: uppercase; }
.nav-link.active { background: #4993e4; color: #555; }
.caret { margin-left: 5px; border: 4px solid transparent; border-top-color: #777; border-bottom: 0; }

.content { padding-top: 30px; }
.breadcrumb { display: flex; height: 36px; margin: 0 0 20px; padding: 7px 15px; list-style: none; background: #fff; box-shadow: 0 1px 5px rgba(0, 0, 0, .1); }
.breadcrumb li + li::before { content: ">"; padding: 0 8px; color: #ccc; }
.columns { display: flex; gap: 30px; align-items: flex-start; }
.main-col { flex: 1; min-width: 0; }
.box { background: #fff; border: 1px solid #e6e6e6; box-shadow: 0 1px 5px rgba(0, 0, 0, .1); }
h1, h2, h3 { margin: 0; font-weight: 500; }
.cart-body { padding: 40px 20px 54px; }
h1 { font-size: 40px; line-height: 44px; margin-bottom: 17px; }
table { width: 100%; border-collapse: collapse; }
th, td { padding: 8px; text-align: left; vertical-align: top; }
.cart thead th { border-bottom: 2px solid #ddd; padding: 10px 8px 9px; }
.cart { table-layout: fixed; }
.c-product { width: 20%; }
.c-qty { width: 21%; }
.c-price { width: 23%; }
.c-disc { width: 22%; }
.cart th { font-weight: 700; }
.cart .cart-total { font-size: 18px; padding-top: 10px; }
.cart-footer { display: flex; justify-content: space-between; padding: 20px; border-top: 1px solid #eee; background: #f7f7f7; }
.actions { display: flex; gap: 3px; }
.btn { height: 34px; padding: 0 12px 2px 14px; gap: 7px; border: 1px solid #ccc; border-radius: 3px; background: #fff; }
.btn svg { width: 14px; height: 14px; }
.btn.primary { padding: 0 15px 2px 12px; gap: 6px; border-color: #77ade9; background: #88b5eb; color: #fff; font-weight: 500; }
.flip { transform: scaleX(-1); }
.cards { display: flex; gap: 30px; margin-top: 30px; }
.card { flex: 1; display: flex; justify-content: space-between; min-height: 120px; padding: 19px 20px; background: #f7f7f7; }
h2 { font-size: 18px; }

.summary { flex: 0 0 255px; min-height: 480px; }
.summary-head { padding: 40px 20px; border-bottom: 1px solid #eee; background: #f7f7f7; }
h3 { font-size: 24px; line-height: 26px; }
.summary-body { padding: 19px 20px; }
.summary p { margin: 0 0 41px; color: #777; }
.totals td, .totals th { padding: 7px 8px 9px; border-top: 1px solid #ddd; }
.totals td { width: 151px; padding-right: 40px; color: #999; }
.totals th { white-space: nowrap; font-weight: 700; }
.totals .grand td, .totals .grand th { padding-top: 10px; color: #555; font-size: 18px; font-weight: 700; }

/* Taskbar */
.taskbar {
  display: flex;
  align-items: center;
  height: 48px;
  box-shadow: inset 0 1px #3c4446;
  background: linear-gradient(90deg, #212153 0, #212150 10%, #222426 17%, #242424 50%, #222325 88%, #212148 100%);
  font-family: "Open Sans", sans-serif;
  color: #fff;
}
.weather { width: 208px; padding-left: 19px; }
.weather button { position: relative; }
.weather svg { width: 28px; height: 28px; }
.count { position: absolute; width: 16px; height: 16px; border-radius: 8px; color: #111; font-size: 11px; line-height: 16px; text-align: center; }
.pink { top: -3px; right: 0; background: #ff99a8; }
.lilac { top: 0; right: 4px; background: #c5bce6; }
.app { position: relative; width: 44px; height: 40px; border-radius: 4px; }
.app svg { width: 24px; height: 24px; }
.search { display: flex; align-items: center; width: 220px; height: 32px; margin: 0 2px 0 3px; padding: 0 12px 0 11px; border: 1px solid #555; border-radius: 16px; background: #414141; }
.search input { flex: 1; min-width: 0; margin-left: 9px; font-size: 13px; outline: 0; }
.search input::placeholder { color: #ccc; opacity: 1; }
.koala { width: 42px; height: 26px; }
.apps { display: flex; }
.current { background: #303234; }
.running::after, .current::after { content: ""; position: absolute; bottom: 0; width: 6px; height: 3px; border-radius: 2px; background: #999; }
.current::after { width: 16px; background: #c5bce6; }
.tray { display: flex; align-items: center; margin-left: auto; padding-right: 20px; }
.status { gap: 8px; margin: 0 16px; }
.clock { flex-direction: column; align-items: flex-end; font-size: 12px; line-height: 16px; }
.bell { margin: 0 16px 0 7px; }
.copilot svg { width: 24px; height: 24px; }
```
